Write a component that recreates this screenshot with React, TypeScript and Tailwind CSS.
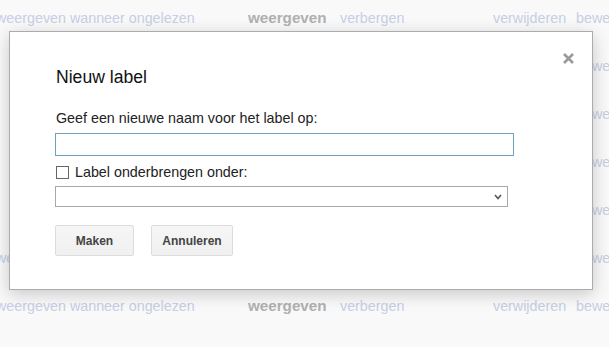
import React from "react";

const rows = [true, false, false, false, false, true, true];

function BgRow({ full }: { full: boolean }) {
  return (
    <div className="flex h-[48px] items-center whitespace-nowrap text-[14.3px] leading-[16px]">
      <span className="-ml-[4px] w-[252px] shrink-0 text-[#c6cfe6]">
        {full ? "weergeven wanneer ongelezen" : ""}
      </span>
      <span className="w-[92px] shrink-0 text-[15.2px] font-bold text-[#b0b0b0]">
        {full ? "weergeven" : ""}
      </span>
      <span className="w-[153px] shrink-0 text-[#c6cfe6]">{full ? "verbergen" : ""}</span>
      <span className="w-[83px] shrink-0 text-[#c6cfe6]">{full ? "verwijderen" : ""}</span>
      <span className="shrink-0 text-[#c6cfe6]">bewerken</span>
    </div>
  );
}

export default function App() {
  return (
    <div
      className="relative h-[347px] w-[609px] overflow-hidden bg-[#f9f9f9]"
      style={{ fontFamily: '"Liberation Sans", Arial, sans-serif' }}
    >
      <div className="-mt-[6px] flex flex-col">
        {rows.map((f, i) => (
          <BgRow key={i} full={f} />
        ))}
      </div>

      <div className="absolute left-[9px] top-[31px] h-[259px] w-[584px] border border-[#acacac] bg-white shadow-[0_4px_16px_rgba(0,0,0,0.2)]">
        <svg
          className="absolute left-[553px] top-[21px]"
          width="11"
          height="11"
          viewBox="0 0 11 11"
        >
          <path d="M1 1L10 10M10 1L1 10" stroke="#9a9a9a" strokeWidth="2.6" />
        </svg>

        <div className="flex flex-col pl-[45px] pt-[35px] text-[#222]">
          <div className="ml-[1px] text-[17.6px] leading-[20px] text-[#111]">Nieuw label</div>
          <div className="ml-[1px] mt-[23px] text-[14.3px] leading-[16px]">
            Geef een nieuwe naam voor het label op:
          </div>
          <div className="mt-[7px] h-[23px] w-[459px] border border-[#6fa3bd] bg-white" />
          <div className="mt-[8px] flex h-[16px] items-center text-[14.3px] leading-[16px]">
            <span className="ml-[1px] h-[13px] w-[13px] border border-[#666] bg-white" />
            <span className="ml-[6px]">Label onderbrengen onder:</span>
          </div>
          <div className="mt-[6px] flex h-[21px] w-[453px] items-center justify-end border border-[#a9a9a9] bg-white pr-[5px]">
            <svg width="8" height="6" viewBox="0 0 8 6">
              <path d="M1 1L4 4.5L7 1" stroke="#555" strokeWidth="1.6" fill="none" />
            </svg>
          </div>
          <div className="mt-[18px] flex gap-[17px]">
            <div className="flex h-[31px] w-[79px] items-center justify-center rounded-[2px] border border-[#dcdcdc] bg-gradient-to-b from-[#f6f6f6] to-[#f0f0f0] text-[12px] font-bold text-[#444]">
              Maken
            </div>
            <div className="flex h-[31px] w-[82px] items-center justify-center rounded-[2px] border border-[#dcdcdc] bg-gradient-to-b from-[#f6f6f6] to-[#f0f0f0] text-[12px] font-bold text-[#444]">
              Annuleren
            </div>
          </div>
        </div>
      </div>
    </div>
  );
}
